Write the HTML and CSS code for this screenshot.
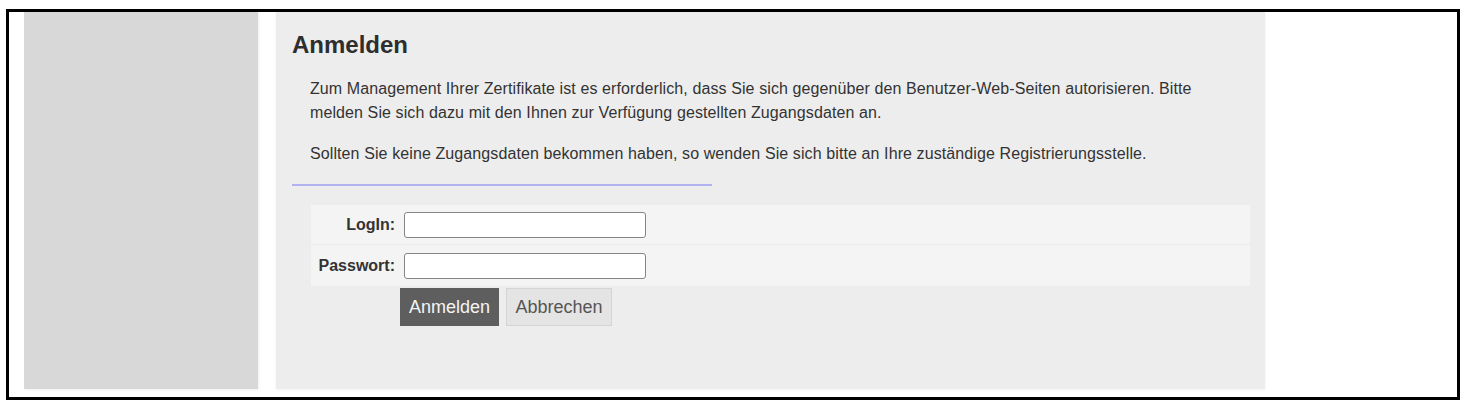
FILE: index.html
```html
<!DOCTYPE html>
<html lang="de">
<head>
<meta charset="utf-8">
<title>Anmelden</title>
<link rel="stylesheet" href="styles.css">
</head>
<body>
<div class="frame">
  <div class="sidebar"></div>
  <main class="panel">
    <h1 class="title">Anmelden</h1>
    <p class="intro">Zum Management Ihrer Zertifikate ist es erforderlich, dass Sie sich gegenüber den Benutzer-Web-Seiten autorisieren. Bitte melden Sie sich dazu mit den Ihnen zur Verfügung gestellten Zugangsdaten an.</p>
    <p class="intro">Sollten Sie keine Zugangsdaten bekommen haben, so wenden Sie sich bitte an Ihre zuständige Registrierungsstelle.</p>
    <div class="rule"></div>
    <form class="login">
      <div class="row">
        <label class="label" for="login">LogIn:</label>
        <div class="field"><input class="input" id="login" type="text"></div>
      </div>
      <div class="row">
        <label class="label" for="pw">Passwort:</label>
        <div class="field"><input class="input" id="pw" type="password"></div>
      </div>
      <div class="actions">
        <button type="button" class="btn btn-primary">Anmelden</button>
        <button type="button" class="btn btn-secondary">Abbrechen</button>
      </div>
    </form>
  </main>
</div>
</body>
</html>
```
FILE: styles.css
```css
html, body {
  margin: 0;
  padding: 0;
  background: #ffffff;
}

body {
  font-family: "Liberation Sans", Arial, sans-serif;
  color: #333333;
}

.frame {
  box-sizing: border-box;
  width: 1454px;
  height: 391px;
  margin: 9px 0 0 6px;
  border: 3px solid #000000;
  padding: 0 0 8px 15px;
  display: flex;
  gap: 18px;
}

.sidebar {
  width: 234px;
  flex: none;
  background: #d8d8d8;
  box-shadow: 1px 1px 2px rgba(0, 0, 0, 0.06);
}

.panel {
  box-sizing: border-box;
  width: 989px;
  flex: none;
  background: #ededed;
  padding: 19px 15px 0 16px;
  box-shadow: 0 1px 3px rgba(0, 0, 0, 0.06);
}

.title {
  margin: 0 0 18px 0;
  font-size: 24px;
  line-height: 28px;
  font-weight: bold;
  color: #2e2e2e;
}

.intro {
  max-width: 900px;
  margin: 0 0 17px 18px;
  font-size: 16px;
  letter-spacing: 0.1px;
  line-height: 24px;
  color: #333333;
}

.intro + .intro {
  margin-bottom: 18px;
}

.rule {
  width: 420px;
  height: 2px;
  background: #b3b3f2;
  margin-bottom: 19px;
}

.login {
  margin-left: 19px;
}

.row {
  display: flex;
  align-items: center;
  height: 39px;
  background: #f4f4f4;
  border-bottom: 1px solid #ebebeb;
}

.row + .row {
  height: 41px;
  border-bottom: none;
}

.label {
  box-sizing: border-box;
  width: 87px;
  padding-right: 3px;
  text-align: right;
  font-size: 16px;
  font-weight: bold;
  color: #333333;
}

.field {
  padding-left: 6px;
  display: flex;
}

.input {
  box-sizing: border-box;
  width: 242px;
  height: 26px;
  border: 1px solid #858585;
  border-radius: 3px;
  background: #ffffff;
  padding: 0 4px;
  margin: 0;
  font-size: 14px;
  font-family: "Liberation Sans", Arial, sans-serif;
}

.actions {
  display: flex;
  gap: 7px;
  padding: 2px 0 0 89px;
}

.btn {
  box-sizing: border-box;
  height: 38px;
  margin: 0;
  font-family: "Liberation Sans", Arial, sans-serif;
  font-size: 18px;
  line-height: 1;
  cursor: pointer;
}

.btn-primary {
  width: 99px;
  padding: 0 6px;
  background: #5e5e5e;
  border: 1px solid #5e5e5e;
  color: #f4f4f4;
}

.btn-secondary {
  width: 106px;
  padding: 0 7px;
  background: #e4e4e4;
  border: 1px solid #d4d4d4;
  color: #555555;
}
```
